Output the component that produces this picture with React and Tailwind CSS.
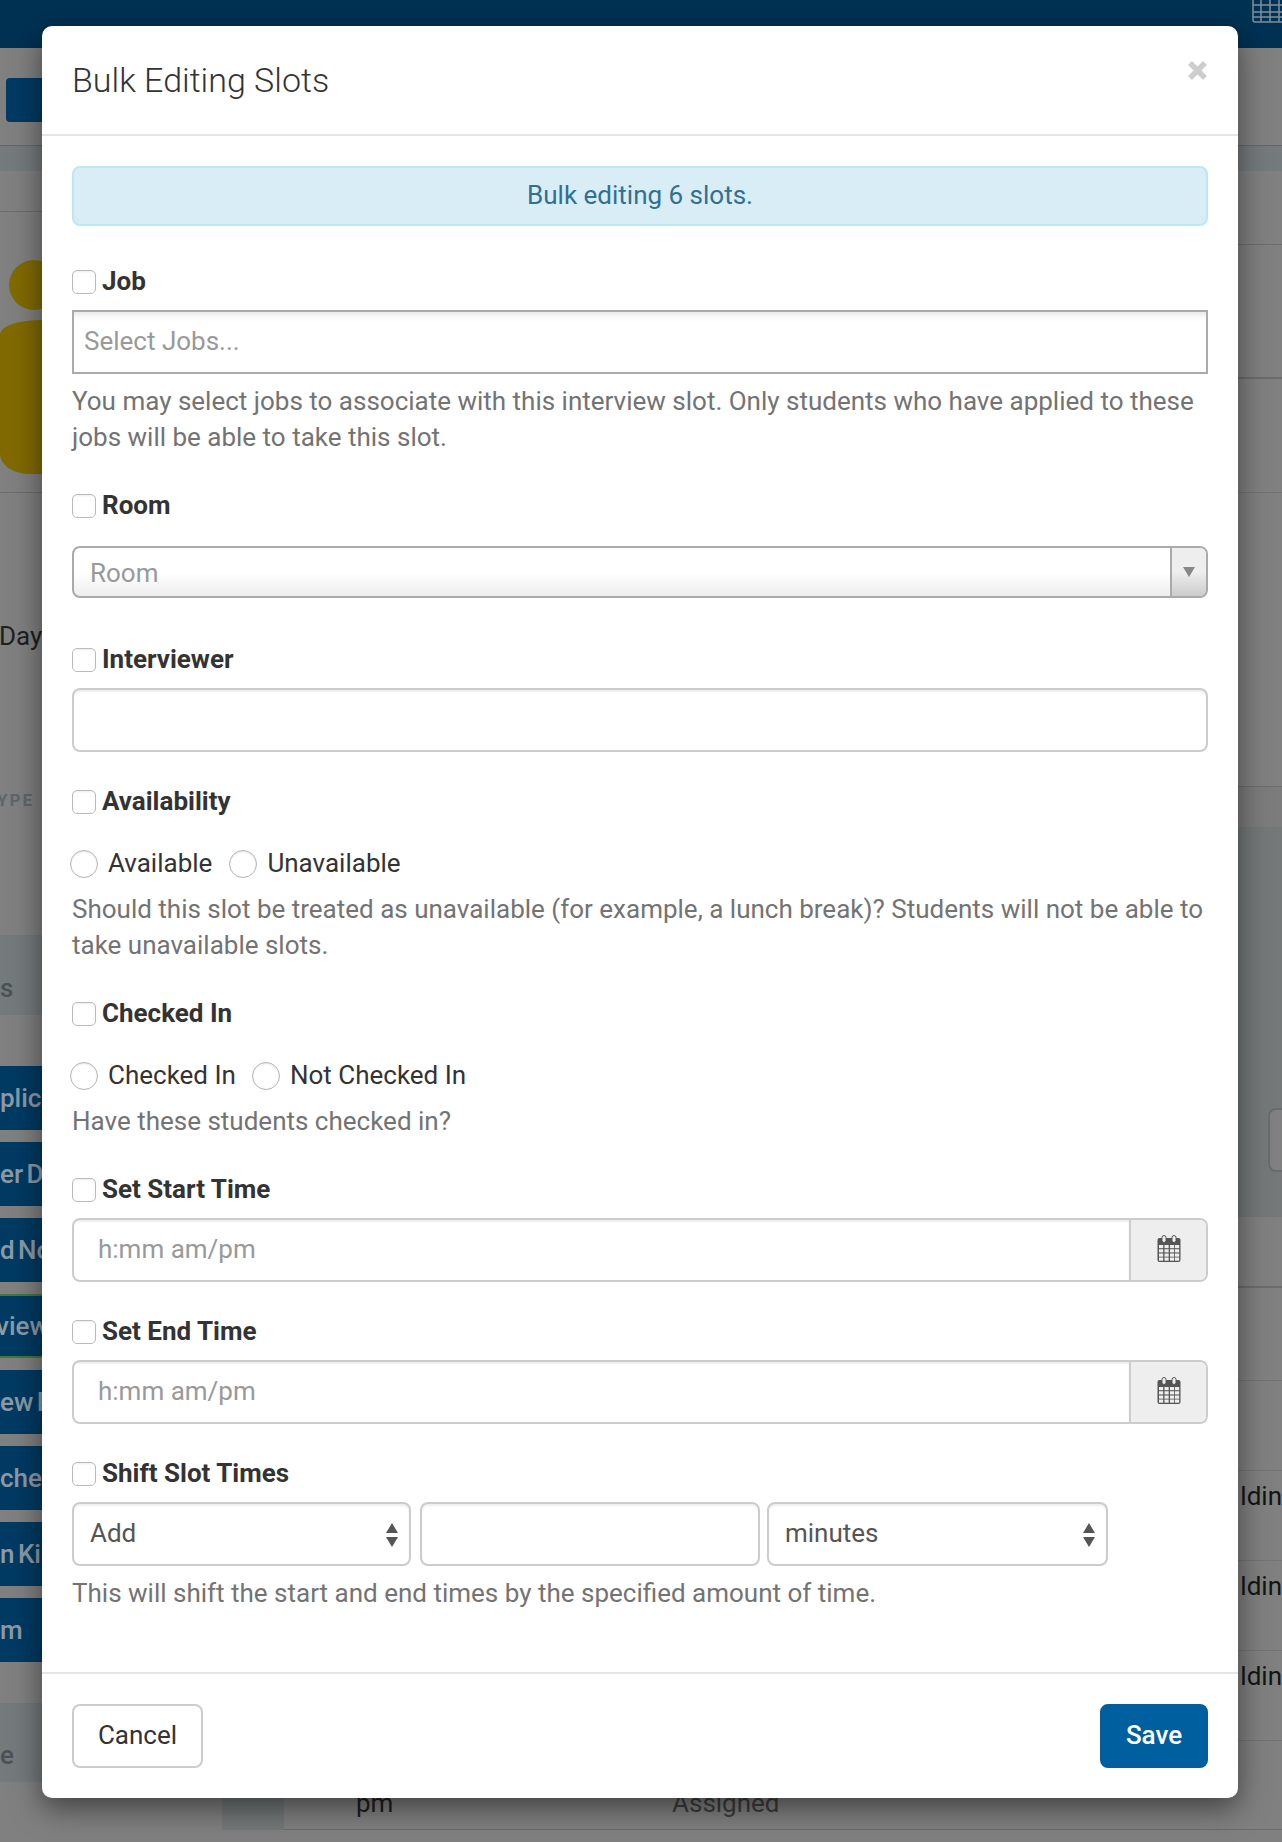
const labelRow = "flex items-center h-6 text-[26px] font-bold text-[#333]";

const CheckLabel = ({ text, className = "" }) => (
  <label className={`${labelRow} ${className}`}>
    <input type="checkbox" className="appearance-none w-6 h-6 mr-[6px] shrink-0 bg-white border border-[#bbb] rounded-[5px] shadow-[inset_0_1px_2px_rgba(0,0,0,0.08)]" />
    <span className="pb-[2px]">{text}</span>
  </label>
);

const Radio = ({ text, className = "" }) => (
  <label className={`flex items-center h-7 text-[26px] text-[#333] ${className}`}>
    <input type="radio" className="appearance-none w-7 h-7 -ml-[2px] mr-[10px] shrink-0 bg-white border border-[#b4b4b4] rounded-full shadow-[inset_0_1px_2px_rgba(0,0,0,0.1)]" />
    <span className="pb-[2px]">{text}</span>
  </label>
);

const Help = ({ children, className = "" }) => (
  <p className={`text-[26px] leading-[36px] text-[#737373] ${className}`}>{children}</p>
);

const CalendarIcon = () => (
  <svg width="24" height="27" viewBox="0 0 24 27" className="mb-[3px]">
    <rect x="0.5" y="3" width="23" height="24" rx="2" fill="#555" />
    <rect x="5" y="0.5" width="4" height="7" rx="2" fill="#eee" stroke="#555" strokeWidth="1" />
    <rect x="15" y="0.5" width="4" height="7" rx="2" fill="#eee" stroke="#555" strokeWidth="1" />
    <g fill="#eee">
      {[10, 14.25, 18.5, 22.5].map((y) =>
        [2, 7.5, 13, 18].map((x) => <rect key={`${x}-${y}`} x={x} y={y} width="4.2" height="3.2" />)
      )}
    </g>
  </svg>
);

const TimeInput = () => (
  <div className="flex h-16 mt-4 border-2 border-[#ccc] rounded-lg overflow-hidden">
    <input placeholder="h:mm am/pm" className="flex-1 min-w-0 pl-6 pb-[2px] text-[26px] text-[#555] placeholder:text-[#999] outline-none shadow-[inset_0_2px_2px_rgba(0,0,0,0.07)]" />
    <div className="w-[77px] flex items-center justify-center bg-[#eee] border-l-2 border-[#ccc]">
      <CalendarIcon />
    </div>
  </div>
);

const SelectArrows = () => (
  <svg width="12" height="24" viewBox="0 0 12 24" className="absolute right-[13px] top-[21px] pointer-events-none">
    <path d="M6 0l6 10H0zM0 14h12l-6 10z" fill="#555" />
  </svg>
);

const ShiftSelect = ({ value, className }) => (
  <div className={`relative ${className}`}>
    <select className="appearance-none w-full h-16 pl-4 pb-[2px] bg-white border-2 border-[#ccc] rounded-lg text-[26px] text-[#555] outline-none shadow-[inset_0_2px_2px_rgba(0,0,0,0.07)]">
      <option>{value}</option>
    </select>
    <SelectArrows />
  </div>
);

const sideButtons = [
  { text: "plic", cls: "" },
  { text: "er D", cls: "" },
  { text: "d No", cls: "" },
  { text: "view", cls: "border-y-2 border-[#3f7a3a] -ml-[4px]" },
  { text: "ew P", cls: "" },
  { text: "chec", cls: "" },
  { text: "n Ki", cls: "" },
  { text: "m", cls: "" },
];

const App = () => {
  return (
    <div className="relative w-[1282px] h-[1842px] overflow-hidden bg-[#808080] font-['Roboto',sans-serif]">
      {/* page behind the dialog, dimmed */}
      <div className="h-12 bg-[#003153] flex justify-end items-start overflow-hidden">
        <svg width="30" height="23" viewBox="0 0 30 23" fill="none" stroke="#7f8e9a" strokeWidth="1.5">
          <path d="M1 -2V20a2 2 0 0 0 2 2H30M1 5H30M1 12H30M1 17H30M9 0V22M18 0V22M27 0V22" />
        </svg>
      </div>
      <div className="h-[97px] pt-[30px]">
        <div className="ml-[6px] w-[200px] h-11 rounded bg-[#003a63]"></div>
      </div>
      <div className="h-[26px] bg-[#757a7c] border-t border-[#666]"></div>

      <div className="flex">
        <div className="w-[222px] shrink-0">
          <div className="h-[41px] border-b border-[#6c6c6c]"></div>
          <div className="h-[281px] border-b border-[#6c6c6c] pt-[48px]">
            <div className="w-[50px] h-[50px] ml-[9px] rounded-full bg-[#806a00]"></div>
            <div className="w-[90px] h-[154px] mt-[10px] rounded-tl-[42px_14px] rounded-bl-[30px_20px] bg-[#806a00]"></div>
          </div>
          <div className="h-[158px] flex items-end text-[26px] leading-[30px] text-[#1f1f1f] -ml-px">Day</div>
          <div className="h-[159px] flex items-end text-[17px] font-bold tracking-[2px] leading-[20px] text-[#5c666e] -ml-[3px]">YPE</div>
          <div className="mt-[125px] h-[80px] bg-[#757a7c] flex items-center pt-[26px] text-[26px] font-medium text-[#4a5258]">s</div>
          <div className="mt-[51px] flex flex-col gap-3 overflow-hidden">
            {sideButtons.map((b) => (
              <div key={b.text} className={`h-16 bg-[#003a63] flex items-center text-[26px] font-medium whitespace-nowrap [word-spacing:-3px] text-[#8c9aa6] ${b.cls}`}>
                {b.text}
              </div>
            ))}
          </div>
          <div className="mt-[41px] h-[79px] bg-[#757a7c] flex items-center pt-[26px] text-[26px] font-medium text-[#4a5258]">e</div>
        </div>

        <div className="flex-1 flex flex-col bg-[#808080]">
          <div className="h-[74px] border-b border-[#6c6c6c]"></div>
          <div className="h-[134px] border-b-2 border-[#6c6c6c]"></div>
          <div className="h-[114px] border-b border-[#747474]"></div>
          <div className="h-[294px] border-b border-[#6c6c6c]"></div>
          <div className="h-[40px] bg-[#7c7c7c]"></div>
          <div className="h-[390px] bg-[#747879] flex justify-end items-start pt-[281px]">
            <div className="w-[14px] h-16 border-2 border-r-0 border-[#686c6d] rounded-l-lg bg-[#808080]"></div>
          </div>
          <div className="h-[71px] border-b-2 border-[#6c6c6c]"></div>
          <div className="h-[93px] border-b border-[#747474]"></div>
          <div className="h-[90px] border-b border-[#747474]"></div>
          {["ldin", "ldin", "ldin"].map((t, i) => (
            <div key={i} className="h-[90px] border-b border-[#747474] flex justify-end items-start pt-[7px]">
              <span className="text-[26px] leading-[36px] text-[#141414]">{t}</span>
            </div>
          ))}
          <div className="bg-[#747879] pl-[62px]">
            <div className="h-[89px] bg-[#808080] border-b border-[#6c6c6c] pl-[72px] pt-[47px] flex text-[26px] leading-[30px]">
              <span className="w-[316px] text-[#1f1f1f]">pm</span>
              <span className="text-[#3d3d3d]">Assigned</span>
            </div>
          </div>
          <div className="flex-1 bg-[#747879]"></div>
        </div>
      </div>

      {/* dialog */}
      <div className="absolute left-[42px] top-[26px] w-[1196px] bg-white rounded-[10px] shadow-[0_10px_30px_rgba(0,0,0,0.5)]">
        <div className="relative h-[110px] border-b-2 border-[#e5e5e5] px-[30px] flex items-center">
          <h4 className="text-[34px] font-light text-[#333]">Bulk Editing Slots</h4>
          <span className="absolute right-[31px] top-[35px] text-[#cdcdcd]">
            <svg width="19" height="19" viewBox="0 0 19 19" className="block">
              <path d="M2 2l15 15M17 2L2 17" stroke="currentColor" strokeWidth="5.5" />
            </svg>
          </span>
        </div>

        <div className="px-[30px] pt-[30px] pb-[61px]">
          <div className="h-[60px] pb-[2px] flex items-center justify-center bg-[#d9edf7] border-2 border-[#bce8f1] rounded-lg text-[26px] text-[#31708f]">
            Bulk editing 6 slots.
          </div>

          <CheckLabel text="Job" className="mt-[44px]" />
          <input placeholder="Select Jobs..." className="block w-full h-16 mt-4 pl-[10px] pb-[2px] border-2 border-[#aaa] text-[26px] text-[#555] placeholder:text-[#999] outline-none shadow-[inset_0_10px_8px_-8px_rgba(0,0,0,0.12)]" />
          <Help className="mt-[9px]">
            You may select jobs to associate with this interview slot. Only students who have applied to these jobs will be able to take this slot.
          </Help>

          <CheckLabel text="Room" className="mt-[39px]" />
          <div className="flex h-[52px] mt-7 border-2 border-[#aaa] rounded-lg overflow-hidden bg-gradient-to-b from-white from-50% to-[#eee]">
            <span className="flex-1 pl-4 pt-[2px] flex items-center text-[26px] text-[#999]">Room</span>
            <span className="w-[36px] flex items-center justify-center border-l-2 border-[#aaa] bg-gradient-to-b from-[#eee] from-50% to-[#ccc]">
              <svg width="12" height="10" viewBox="0 0 12 10"><path d="M0 0h12L6 10z" fill="#888" /></svg>
            </span>
          </div>

          <CheckLabel text="Interviewer" className="mt-[50px]" />
          <input className="block w-full h-16 mt-4 border-2 border-[#ccc] rounded-lg outline-none shadow-[inset_0_2px_2px_rgba(0,0,0,0.07)]" />

          <CheckLabel text="Availability" className="mt-[38px]" />
          <div className="flex mt-9 gap-[19px]">
            <Radio text="Available" />
            <Radio text="Unavailable" />
          </div>
          <Help className="mt-[13px]">
            Should this slot be treated as unavailable (for example, a lunch break)? Students will not be able to take unavailable slots.
          </Help>

          <CheckLabel text="Checked In" className="mt-[39px]" />
          <div className="flex mt-9 gap-[18px]">
            <Radio text="Checked In" />
            <Radio text="Not Checked In" />
          </div>
          <Help className="mt-[13px]">Have these students checked in?</Help>

          <CheckLabel text="Set Start Time" className="mt-[39px]" />
          <TimeInput />

          <CheckLabel text="Set End Time" className="mt-[38px]" />
          <TimeInput />

          <CheckLabel text="Shift Slot Times" className="mt-[38px]" />
          <div className="flex mt-4">
            <ShiftSelect value="Add" className="w-[339px]" />
            <input className="w-[340px] h-16 ml-[9px] border-2 border-[#ccc] rounded-lg outline-none shadow-[inset_0_2px_2px_rgba(0,0,0,0.07)]" />
            <ShiftSelect value="minutes" className="w-[341px] ml-[7px]" />
          </div>
          <Help className="mt-[9px]">This will shift the start and end times by the specified amount of time.</Help>
        </div>

        <div className="border-t-2 border-[#e5e5e5] p-[30px] flex justify-between">
          <button className="w-[131px] h-16 pb-[2px] bg-white border-2 border-[#ccc] rounded-lg text-[26px] text-[#333]">Cancel</button>
          <button className="w-[108px] h-16 pb-[2px] bg-[#00609f] border-2 border-[#0a5c96] rounded-lg text-[26px] font-medium text-white">Save</button>
        </div>
      </div>
    </div>
  );
};

export default App;
